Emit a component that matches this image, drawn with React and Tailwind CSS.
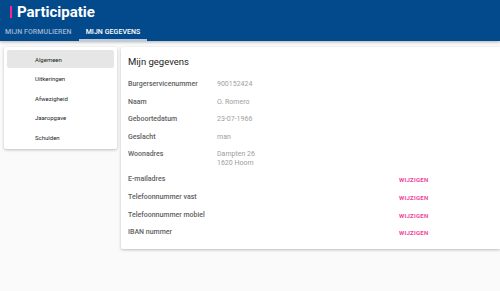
import React from 'react';

const rows = [
  { label: 'Burgerservicenummer', value: '900152424' },
  { label: 'Naam', value: 'O. Romero' },
  { label: 'Geboortedatum', value: '23-07-1966' },
  { label: 'Geslacht', value: 'man' },
  { label: 'Woonadres', value: ['Dampten 26', '1620 Hoorn'] },
];

const editable = ['E-mailadres', 'Telefoonnummer vast', 'Telefoonnummer mobiel', 'IBAN nummer'];

const menu = ['Algemeen', 'Uitkeringen', 'Afwezigheid', 'Jaaropgave', 'Schulden'];

export default function App() {
  return (
    <div className="min-h-[291px] w-[500px] overflow-hidden bg-[#fafafa] font-['Roboto',sans-serif]">
      <header className="h-[41px] bg-[#034a8c] shadow-[0_1px_3px_rgba(0,0,0,0.3)]">
        <div className="flex h-[23px] items-center pl-[10px] pt-[1px]">
          <span className="mr-[5px] h-[12px] w-[2px] bg-[#ff1f8e]" />
          <span className="text-[15px] font-bold leading-none text-white">Participatie</span>
        </div>
        <nav className="flex h-[18px] pl-[5px] text-[7px] font-medium uppercase tracking-[0.01em]">
          <div className="flex items-center text-[#9fb5d0]">Mijn formulieren</div>
          <div className="ml-[7px] flex items-center border-b-[2px] border-[#b9cbe0] px-[7px] pt-[2px] text-white">
            Mijn gegevens
          </div>
        </nav>
      </header>

      <div className="mt-[6px] flex items-start gap-[4px] pl-[4px]">
        <aside className="w-[113px] rounded-[2px] bg-white py-[3px] shadow-[0_1px_3px_rgba(0,0,0,0.25)]">
          {menu.map((item, i) => (
            <div
              key={item}
              className={`mx-[3px] flex h-[18px] items-center pl-[28px] text-[6px] text-[#222] ${
                i === 0 ? 'rounded-[2px] bg-[#e6e6e6]' : ''
              } ${i > 0 ? 'mt-[1.5px]' : ''}`}
            >
              {item}
            </div>
          ))}
        </aside>

        <main className="flex-1 rounded-l-[2px] bg-white pb-[3px] pl-[7px] pt-[9px] shadow-[0_1px_3px_rgba(0,0,0,0.25)]">
          <h1 className="text-[9.5px] leading-[12px] text-[#222]">Mijn gegevens</h1>
          <div className="mt-[12px] text-[7px]">
            {rows.map((r) => (
              <div key={r.label} className="flex min-h-[17.6px] leading-[9px]">
                <div className="w-[89px] font-medium text-[#616161]">{r.label}</div>
                <div className="text-[#9e9e9e]">
                  {Array.isArray(r.value)
                    ? r.value.map((v) => <div key={v}>{v}</div>)
                    : r.value}
                </div>
              </div>
            ))}
            <div className="mt-[7px]">
              {editable.map((l) => (
                <div key={l} className="flex h-[17.6px] items-start leading-[9px]">
                  <div className="w-[271px] font-medium text-[#616161]">{l}</div>
                  <div className="text-[6px] font-bold tracking-[0.04em] text-[#f0469b]">WIJZIGEN</div>
                </div>
              ))}
            </div>
          </div>
        </main>
      </div>
    </div>
  );
}
